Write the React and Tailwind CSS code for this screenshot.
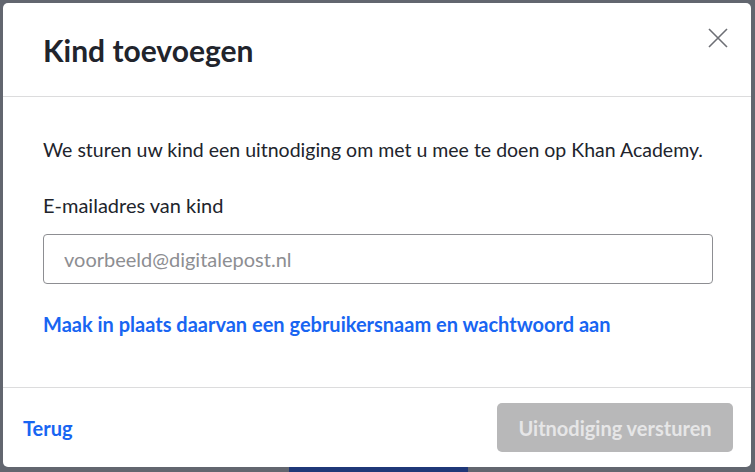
import React from 'react';

const App = () => {
  return (
    <div
      className="relative w-[755px] h-[472px] overflow-hidden bg-[#62666f]"
      style={{ fontFamily: 'Lato, "Noto Sans", sans-serif' }}
    >
      {/* page button behind the overlay */}
      <div className="absolute left-[289px] top-[462px] w-[179px] h-[30px] rounded-md bg-[#1f3878]" />

      <div className="relative ml-[3px] mt-[3px] w-[748px] h-[464px] rounded-[5px] bg-white flex flex-col">
        <div className="h-[94px] shrink-0 flex items-center justify-between pl-[40px] pr-[22px] border-b border-[#dcdcdd]">
          <h1 className="text-[30px] font-bold text-[#21242c] leading-none pt-[1px]">Kind toevoegen</h1>
          <button type="button" className="text-[#6d6f75] self-start mt-[24px]">
            <svg width="22" height="22" viewBox="0 0 22 22" fill="none" stroke="currentColor" strokeWidth="1.6">
              <path d="M2 2 L20 20 M20 2 L2 20" />
            </svg>
          </button>
        </div>

        <div className="flex-1 px-[40px] pt-[41px]">
          <p className="text-[19.5px] whitespace-nowrap text-[#21242c] leading-[24px]">
            We sturen uw kind een uitnodiging om met u mee te doen op Khan Academy.
          </p>
          <label className="block mt-[31px] text-[20px] text-[#21242c] leading-[24px]">E-mailadres van kind</label>
          <input
            type="text"
            placeholder="voorbeeld@digitalepost.nl"
            className="mt-[17px] w-[670px] h-[50px] rounded-[4px] border border-[#8d8e92] px-[20px] text-[20px] text-[#21242c] placeholder:text-[#8d8e92] outline-none"
          />
          <a href="#" className="block mt-[28px] text-[20px] font-bold text-[#1865f2] leading-[24px]">
            Maak in plaats daarvan een gebruikersnaam en wachtwoord aan
          </a>
        </div>

        <div className="h-[80px] shrink-0 flex items-center justify-between pl-[20px] pr-[18px] border-t border-[#dcdcdd]">
          <a href="#" className="text-[20px] font-bold text-[#1865f2]">Terug</a>
          <button
            type="button"
            disabled
            className="w-[236px] h-[49px] rounded-[5px] bg-[#b8b8b9] text-[20px] font-bold text-[#e6e6e7]"
          >
            Uitnodiging versturen
          </button>
        </div>
      </div>
    </div>
  );
};

export default App;
